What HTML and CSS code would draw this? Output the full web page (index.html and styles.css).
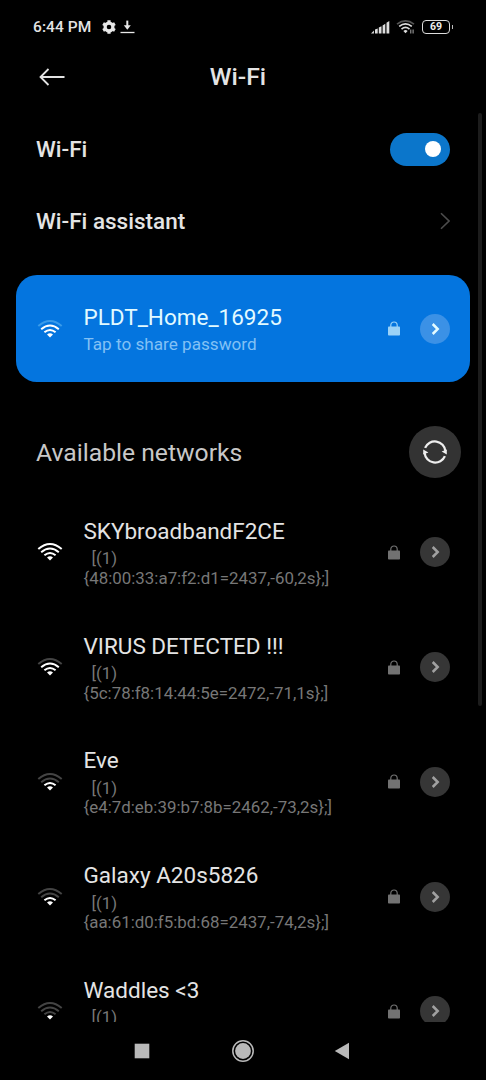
FILE: index.html
```html
<!DOCTYPE html>
<html lang="en">
<head>
<meta charset="utf-8">
<title>Wi-Fi</title>
<link rel="stylesheet" href="styles.css">
</head>
<body>
<svg class="defs" width="0" height="0" aria-hidden="true">
  <symbol id="wifi" viewBox="0 0 26 20">
    <g fill="none" stroke-width="2">
      <path class="arc-outer" d="M1.3 7.1Q13 -3 24.7 7.1"/>
      <path class="arc-mid" d="M4.2 10.2Q13 2.9 21.8 10.2"/>
      <path class="arc-inner" d="M7.4 13.3Q13 8.7 18.6 13.3"/>
    </g>
    <path d="M13 18.6L10 15.6Q13 13.1 16 15.6Z" fill="currentColor"/>
  </symbol>
  <symbol id="lock" viewBox="0 0 12 15">
    <path d="M2.8 6V4.2a3.2 3.2 0 0 1 6.4 0V6" fill="none" stroke="currentColor" stroke-width="1.2"/>
    <rect x="0" y="5.6" width="12" height="9" rx=".8" fill="currentColor"/>
  </symbol>
  <symbol id="chevron" viewBox="0 0 30 30">
    <path d="M12.7 10l5 5-5 5" fill="none" stroke="currentColor" stroke-width="2.5"/>
  </symbol>
</svg>
<div class="screen">
  <header class="status">
    <span class="time">6:44 PM</span>
    <svg class="gear" width="14" height="14" viewBox="0 0 14 14"><circle cx="7" cy="7" r="3.9" fill="none" stroke="#e8e8e8" stroke-width="3.2"/><g stroke="#e8e8e8" stroke-width="3.2"><path d="M7 .2V2.5M7 11.5v2.3M1.1 3.6l2 1.15M10.9 9.25l2 1.15M1.1 10.4l2-1.15M10.9 4.75l2-1.15"/></g></svg>
    <svg class="download" width="15" height="14" viewBox="0 0 15 14"><path d="M7.3 .6v6" stroke="#e8e8e8" stroke-width="2"/><path d="M3.8 5.2h7L7.3 9.8z" fill="#e8e8e8"/><path d="M.5 12.5h14" stroke="#e8e8e8" stroke-width="1.3"/></svg>
    <span class="spacer"></span>
    <svg class="signal" width="19" height="14" viewBox="0 0 19 14" fill="#ddd"><path d="M0 13.4L2.9 10.4V13.4ZM4 9.6l2.7-1.2v5H4zM7.8 7.6l2.7-1.3v7.1H7.8zM11.6 5.4l2.7-1.6v9.6h-2.7zM15.5 2.8l2.8-1.9v12.5h-2.8z"/></svg>
    <svg class="status-wifi" width="20" height="16" viewBox="0 0 20 16"><g fill="none" stroke="#ddd" stroke-width="1.7"><path d="M1 5.1Q9.5-1.3 18 5.1" stroke="#555"/><path d="M3.2 7.4Q9.5 2.4 15.8 7.4"/><path d="M5.5 10.1Q9.5 6.7 13.5 10.1"/></g><path d="M9.5 14.2L7.4 12Q9.5 10 11.6 12Z" fill="#ddd"/><path d="M14.8 10.5v4M17.1 10.5v4" stroke="#aaa"/></svg>
    <div class="battery">69</div>
  </header>
  <div class="titlebar">
    <svg class="back" width="26" height="18" viewBox="0 0 26 18"><path d="M9.5 1L1.5 9l8 8M1.5 9H25.5" fill="none" stroke="#e3e3e3" stroke-width="1.8"/></svg>
    <h1>Wi-Fi</h1>
  </div>
  <main>
    <div class="setting"><span>Wi-Fi</span><div class="toggle"><div class="knob"></div></div></div>
    <div class="setting"><span>Wi-Fi assistant</span><svg width="10" height="18" viewBox="0 0 10 18"><path d="M1 1.2L9 9l-8 7.8" fill="none" stroke="#4c4c4c" stroke-width="1.6"/></svg></div>
    <section class="connected">
      <svg class="wifi level3"><use href="#wifi"/></svg>
      <div class="info"><div class="name">PLDT_Home_16925</div><div class="hint">Tap to share password</div></div>
      <svg class="lock"><use href="#lock"/></svg><svg class="more"><use href="#chevron"/></svg>
    </section>
    <div class="section-head"><h2>Available networks</h2>
      <div class="refresh"><svg width="26" height="26" viewBox="0 0 26 26"><g fill="none" stroke="#eee" stroke-width="2.3"><path d="M3.1 8.9A10.6 10.6 0 0 1 23.4 12"/><path d="M22.9 17.1A10.6 10.6 0 0 1 2.6 14"/></g><path d="M19.6 12.4L24.8 10.4V15.4zM6.4 13.6L1.2 15.6V10.6z" fill="#eee"/></svg></div>
    </div>
    <div class="network">
      <svg class="wifi level4"><use href="#wifi"/></svg>
      <div class="info"><div class="name">SKYbroadbandF2CE</div><div class="detail"><span>[(1)</span><br>{48:00:33:a7:f2:d1=2437,-60,2s};]</div></div>
      <svg class="lock"><use href="#lock"/></svg><svg class="more"><use href="#chevron"/></svg>
    </div>
    <div class="network">
      <svg class="wifi level3"><use href="#wifi"/></svg>
      <div class="info"><div class="name">VIRUS DETECTED !!!</div><div class="detail"><span>[(1)</span><br>{5c:78:f8:14:44:5e=2472,-71,1s};]</div></div>
      <svg class="lock"><use href="#lock"/></svg><svg class="more"><use href="#chevron"/></svg>
    </div>
    <div class="network">
      <svg class="wifi level2"><use href="#wifi"/></svg>
      <div class="info"><div class="name">Eve</div><div class="detail"><span>[(1)</span><br>{e4:7d:eb:39:b7:8b=2462,-73,2s};]</div></div>
      <svg class="lock"><use href="#lock"/></svg><svg class="more"><use href="#chevron"/></svg>
    </div>
    <div class="network">
      <svg class="wifi level2"><use href="#wifi"/></svg>
      <div class="info"><div class="name">Galaxy A20s5826</div><div class="detail"><span>[(1)</span><br>{aa:61:d0:f5:bd:68=2437,-74,2s};]</div></div>
      <svg class="lock"><use href="#lock"/></svg><svg class="more"><use href="#chevron"/></svg>
    </div>
    <div class="network cut">
      <svg class="wifi level1"><use href="#wifi"/></svg>
      <div class="info"><div class="name">Waddles &lt;3</div><div class="detail"><span>[(1)</span></div></div>
      <svg class="lock"><use href="#lock"/></svg><svg class="more"><use href="#chevron"/></svg>
    </div>
  </main>
  <nav class="navbar">
    <svg width="16" height="16"><rect x=".7" y=".7" width="14.6" height="14.6" fill="#b9b9b9"/></svg>
    <svg width="24" height="24"><circle cx="12" cy="12" r="10.2" fill="none" stroke="#b9b9b9" stroke-width="1.5"/><circle cx="12" cy="12" r="7.9" fill="#b9b9b9"/></svg>
    <svg class="nav-back" width="16" height="18"><path d="M.8 9L15 .8v16.4z" fill="#b9b9b9"/></svg>
  </nav>
  <div class="scrollbar"></div>
</div>
</body>
</html>
```
FILE: styles.css
```css
* { box-sizing: border-box; }
body { margin: 0; background: #000; font-family: Roboto, "Liberation Sans", sans-serif; }
h1, h2 { margin: 0; }
svg { display: block; flex: none; }
.defs { position: absolute; }
.screen { position: relative; width: 486px; height: 1080px; overflow: hidden; background: #000; color: #e4e4e4; display: flex; flex-direction: column; }

.status { height: 50px; flex: none; display: flex; align-items: center; padding: 4px 34px 0 33px; }
.time { font-size: 15.5px; font-weight: 500; line-height: 20px; white-space: nowrap; letter-spacing: .1px; width: 68.5px; }
.gear { margin-right: 4px; }
.spacer { flex: 1; }
.signal { margin-right: 6px; }
.status-wifi { margin-right: 6px; }
.battery { position: relative; width: 28px; height: 14px; margin-right: 2px; border: 1.8px solid #ddd; border-radius: 4px; color: #eee; font-size: 10.5px; font-weight: 700; line-height: 12px; text-align: center; }
.battery::after { content: ""; position: absolute; right: -4px; top: 3.5px; width: 1.5px; height: 4px; background: #bbb; }

.titlebar { height: 63px; flex: none; display: grid; grid-template-columns: 80px 1fr 90px; align-items: center; padding-bottom: 10px; }
.back { margin-left: 39px; }
.titlebar h1 { font-size: 24.7px; line-height: 30px; font-weight: 500; text-align: center; padding-top: 1px; }

main { height: 908.5px; flex: none; overflow: hidden; }
.setting { height: 72px; padding: 0 36px; display: flex; align-items: center; justify-content: space-between; font-size: 22.5px; font-weight: 500; }
.toggle { width: 60px; height: 33px; border-radius: 17px; background: #0b76cb; display: flex; align-items: center; justify-content: flex-end; padding-right: 9px; }
.knob { width: 16px; height: 16px; border-radius: 50%; background: #fff; }

.connected { height: 107px; margin: 18px 16px 0; padding: 0 20px; border-radius: 21px; background: #0475df; color: #e2faff; display: flex; align-items: center; --off: #3a9bea; }
.wifi { width: 26px; height: 20px; margin: 0 20.5px 0 1px; color: #fff; }
.arc-outer { stroke: var(--s4); }
.arc-mid { stroke: var(--s3); }
.arc-inner { stroke: var(--s2); }
.level4 { --s4: #fff; --s3: #fff; --s2: #fff; }
.level3 { --s4: var(--off); --s3: #fff; --s2: #fff; }
.level2 { --s4: var(--off); --s3: var(--off); --s2: #fff; }
.level1 { --s4: var(--off); --s3: var(--off); --s2: var(--off); }
.info { width: 304.5px; flex: none; white-space: nowrap; padding-top: 1.5px; }
.name { font-size: 22.5px; line-height: 27px; }
.hint { font-size: 17.15px; line-height: 24px; padding-top: 1px; color: #82c1f5; }
.connected .info { padding-top: 3.5px; }
.lock { width: 12px; height: 15px; margin-right: 20px; color: #727272; }
.more { width: 30px; height: 30px; border-radius: 50%; background: #363636; color: #a0a0a0; }
.connected .lock { color: #9bd2f7; }
.connected .more { background: #3b91e6; color: #e4fbff; }

.section-head { height: 113px; padding: 27px 25px 0 36px; display: flex; justify-content: space-between; }
.section-head h2 { font-size: 24.7px; font-weight: 400; line-height: 52px; padding-top: 18px; color: #c8c8c8; }
.refresh { width: 52px; height: 52px; margin-top: 17px; border-radius: 50%; background: #333; display: flex; align-items: center; justify-content: center; }

.network { height: 114.75px; padding: 0 36px; display: flex; align-items: center; --off: #444; }
.detail { font-size: 16.9px; line-height: 19.5px; padding-top: 4.5px; color: #777; }
.detail span { padding-left: 8px; }
.cut .info { padding-bottom: 19.5px; }

.navbar { flex: 1; display: flex; align-items: center; padding-left: 134px; gap: 81px; }
.nav-back { margin-left: -2px; }
.scrollbar { position: absolute; right: 4px; top: 113px; width: 4px; height: 593px; border-radius: 2px; background: #1c1c1c; }
```
